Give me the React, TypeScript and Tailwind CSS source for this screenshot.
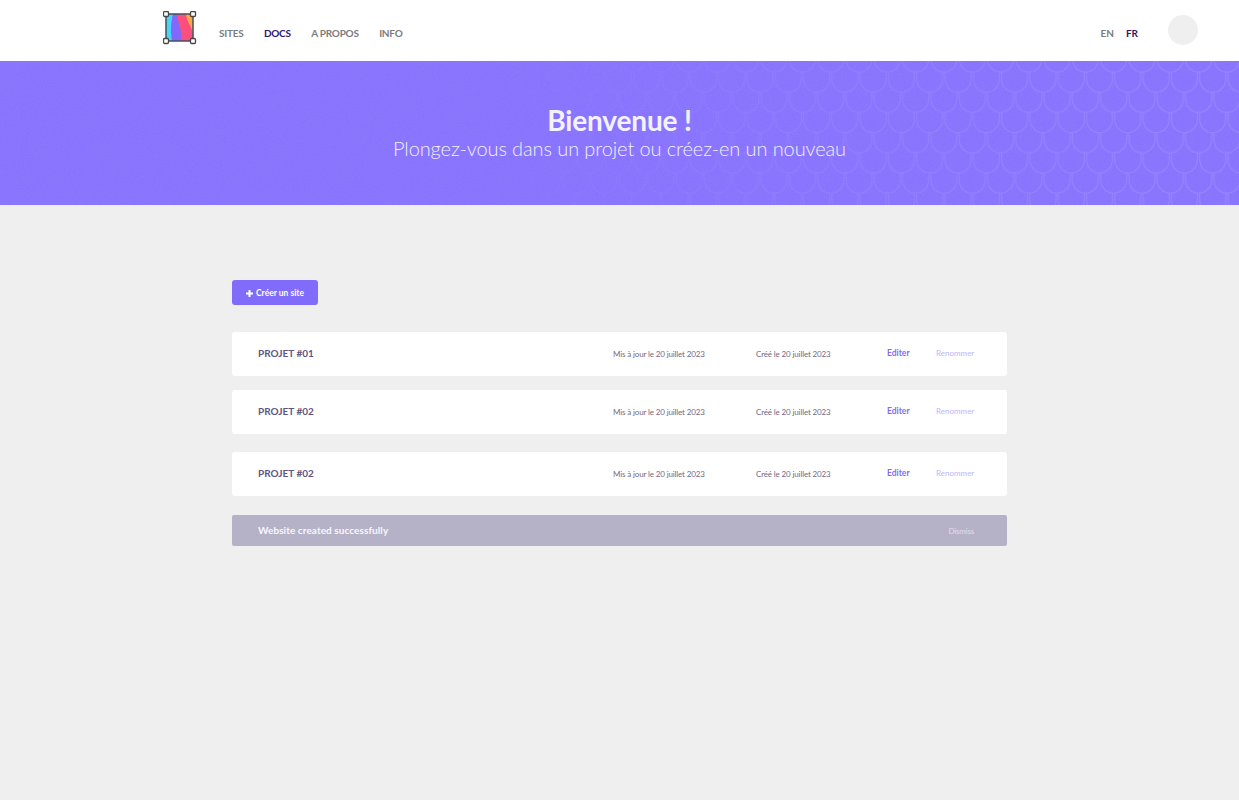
import React from "react";

const font = "font-['Lato','Noto_Sans',sans-serif]";

function Logo() {
  return (
    <svg width="34" height="34" viewBox="0 0 34 34" className="mb-[6px] block shrink-0">
      <defs>
        <clipPath id="logoClip"><rect x="3" y="3" width="27" height="27" /></clipPath>
      </defs>
      <g clipPath="url(#logoClip)">
        <rect x="3" y="3" width="27" height="27" fill="#8268ff" />
        <path d="M3 3H10C7.5 12 7.5 22 9 30H3Z" fill="#45d7fb" />
        <path d="M15 3H30V30H17C22 22 13.5 14 15 3Z" fill="#fb4f7d" />
        <path d="M23 3H30V23C29 15 23.5 11 23 3Z" fill="#fba746" />
      </g>
      <rect x="3" y="3" width="27" height="27" fill="none" stroke="#46505a" strokeWidth="1.5" />
      {[[3, 3], [30, 3], [3, 30], [30, 30]].map(([x, y]) => (
        <rect key={`${x}-${y}`} x={x - 2.5} y={y - 2.5} width="5" height="5" rx="1.2" fill="#fff" stroke="#454545" strokeWidth="1.3" />
      ))}
    </svg>
  );
}

const u = (cx: number, by: number) =>
  `M${cx - 13} ${by - 20}V${by - 13}A13 13 0 0 0 ${cx + 13} ${by - 13}V${by - 20}`;

function Scales() {
  return (
    <svg className="absolute inset-0 h-full w-full" aria-hidden="true">
      <defs>
        <pattern id="scales" width="28.3" height="40.4" patternUnits="userSpaceOnUse" x="-4.15" y="1">
          <path
            d={[u(14.15, 10), u(14.15, 50.4), u(0, 30.2), u(28.3, 30.2)].join("")}
            fill="none"
            stroke="#ffffff"
            strokeWidth="1.1"
          />
        </pattern>
        <linearGradient id="fade" x1="0" x2="1" y1="0" y2="0">
          <stop offset="0.38" stopColor="#fff" stopOpacity="0" />
          <stop offset="0.68" stopColor="#fff" stopOpacity="0.55" />
          <stop offset="1" stopColor="#fff" stopOpacity="1" />
        </linearGradient>
        <mask id="fadeMask">
          <rect width="100%" height="100%" fill="url(#fade)" />
        </mask>
        <filter id="grain" x="0" y="0" width="100%" height="100%">
          <feTurbulence type="fractalNoise" baseFrequency="0.9" numOctaves="2" seed="4" />
          <feColorMatrix values="0 0 0 0 0.35 0 0 0 0 0.3 0 0 0 0 0.9 0 0 0 0.7 -0.12" />
        </filter>
      </defs>
      <rect width="100%" height="100%" fill="url(#scales)" mask="url(#fadeMask)" opacity="0.14" />
      <rect width="100%" height="100%" filter="url(#grain)" opacity="0.5" />
    </svg>
  );
}

function Project({ name, className }: { name: string; className: string }) {
  return (
    <div className={`flex h-[43.5px] items-center rounded-[3px] bg-white pl-[26px] ${className}`}>
      <div className="w-[355px] text-[10px] font-bold text-[#5f5585]">{name}</div>
      <div className="w-[143px] pt-px text-[8px] tracking-[-0.14px] text-[#6f6a86]">Mis à jour le 20 juillet 2023</div>
      <div className="w-[131px] pt-px text-[8px] tracking-[-0.14px] text-[#6f6a86]">Créé le 20 juillet 2023</div>
      <div className="w-[49px] text-[8.5px] font-bold text-[#7f6bf5]">Editer</div>
      <div className="pb-px text-[8px] text-[#bfb4fb]">Renommer</div>
    </div>
  );
}

export default function App() {
  return (
    <div className={`flex min-h-[800px] flex-col bg-[#efefef] ${font}`}>
      <header className="flex h-[61px] items-center bg-white pl-[163px] pr-[41px]">
        <Logo />
        <nav className="ml-[22px] mt-[5px] flex gap-[20.5px] text-[10px] font-bold tracking-[-0.25px] text-[#7b7b80]">
          <span>SITES</span>
          <span className="text-[#2c1a6b]">DOCS</span>
          <span>A PROPOS</span>
          <span>INFO</span>
        </nav>
        <div className="ml-auto mt-[5px] flex gap-[12px] text-[10px] font-bold text-[#7b7b80]">
          <span>EN</span>
          <span className="text-[#2c1a6b]">FR</span>
        </div>
        <div className="mb-[2px] ml-[30px] size-[30px] rounded-full bg-[#efefef]" />
      </header>
      <section className="relative flex h-[144px] flex-col items-center overflow-hidden bg-[#8771ff] pt-[41px] text-white">
        <Scales />
        <h1 className="relative text-[28px] font-bold leading-[36px] tracking-[-0.15px] text-[#f4f2ff]">Bienvenue !</h1>
        <p className="relative text-[20px] font-light leading-[21px] tracking-[-0.1px] text-[#f1efff]">Plongez-vous dans un projet ou créez-en un nouveau</p>
      </section>
      <main className="mx-auto flex w-[775px] flex-col pt-[75px]">
        <button className="flex h-[25px] w-[86px] items-center justify-center gap-[3px] rounded-[3px] bg-[#806bfb] pt-px text-[8.5px] font-bold text-white">
          <svg width="7" height="7" viewBox="0 0 7 7" className="shrink-0"><path d="M2.5 0H4.5V2.5H7V4.5H4.5V7H2.5V4.5H0V2.5H2.5Z" fill="#fff" /></svg>
          Créer un site
        </button>
        <Project name="PROJET #01" className="mt-[27px]" />
        <Project name="PROJET #02" className="mt-[14.5px]" />
        <Project name="PROJET #02" className="mt-[18.5px]" />
        <div className="mt-[19.5px] flex h-[31px] items-center justify-between rounded-[2px] bg-[#b5b1c7] pl-[26px] pr-[33px]">
          <span className="text-[10px] font-bold tracking-[0.07px] text-[#f8f8fb]">Website created successfully</span>
          <span className="text-[8px] tracking-[-0.2px] text-[#e2e0ea]">Dismiss</span>
        </div>
      </main>
    </div>
  );
}
